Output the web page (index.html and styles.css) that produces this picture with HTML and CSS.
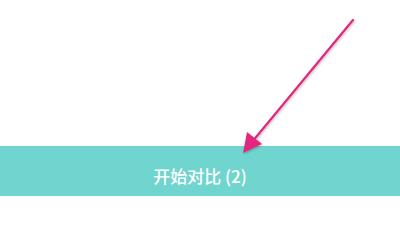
FILE: index.html
```html
<!DOCTYPE html>
<html lang="zh-CN">
<head>
<meta charset="utf-8">
<title>开始对比</title>
<link rel="stylesheet" href="styles.css">
</head>
<body>
<main class="page">
  <div class="spacer"></div>
  <button class="compare-bar" type="button">开始对比 (2)</button>
  <svg class="pointer" width="400" height="200" viewBox="0 0 400 200" aria-hidden="true">
    <defs>
      <filter id="sh" x="-20%" y="-20%" width="140%" height="140%">
        <feDropShadow dx="1" dy="1" stdDeviation="1" flood-color="#000" flood-opacity="0.25"/>
      </filter>
    </defs>
    <g filter="url(#sh)">
      <line x1="353" y1="20" x2="252" y2="142" stroke="#e3267f" stroke-width="2.2" stroke-linecap="round"/>
      <polygon points="243,153 247,132 262,144" fill="#e3267f"/>
    </g>
  </svg>
</main>
</body>
</html>
```
FILE: styles.css
```css
html, body {
  margin: 0;
  padding: 0;
  background: #ffffff;
}
.page {
  position: relative;
  width: 400px;
  height: 200px;
  overflow: hidden;
  display: flex;
  flex-direction: column;
}
.spacer {
  height: 146px;
  flex: none;
}
.compare-bar {
  flex: none;
  height: 50px;
  box-sizing: border-box;
  padding: 8px 0 0 0;
  border: 0;
  margin: 0;
  width: 100%;
  background: #6fd5ce;
  color: #ffffff;
  font-family: "Noto Sans CJK SC", "Noto Sans", sans-serif;
  font-size: 17px;
  font-weight: 500;
  display: flex;
  align-items: center;
  justify-content: center;
}
.pointer {
  position: absolute;
  left: 0;
  top: 0;
  pointer-events: none;
}
```
